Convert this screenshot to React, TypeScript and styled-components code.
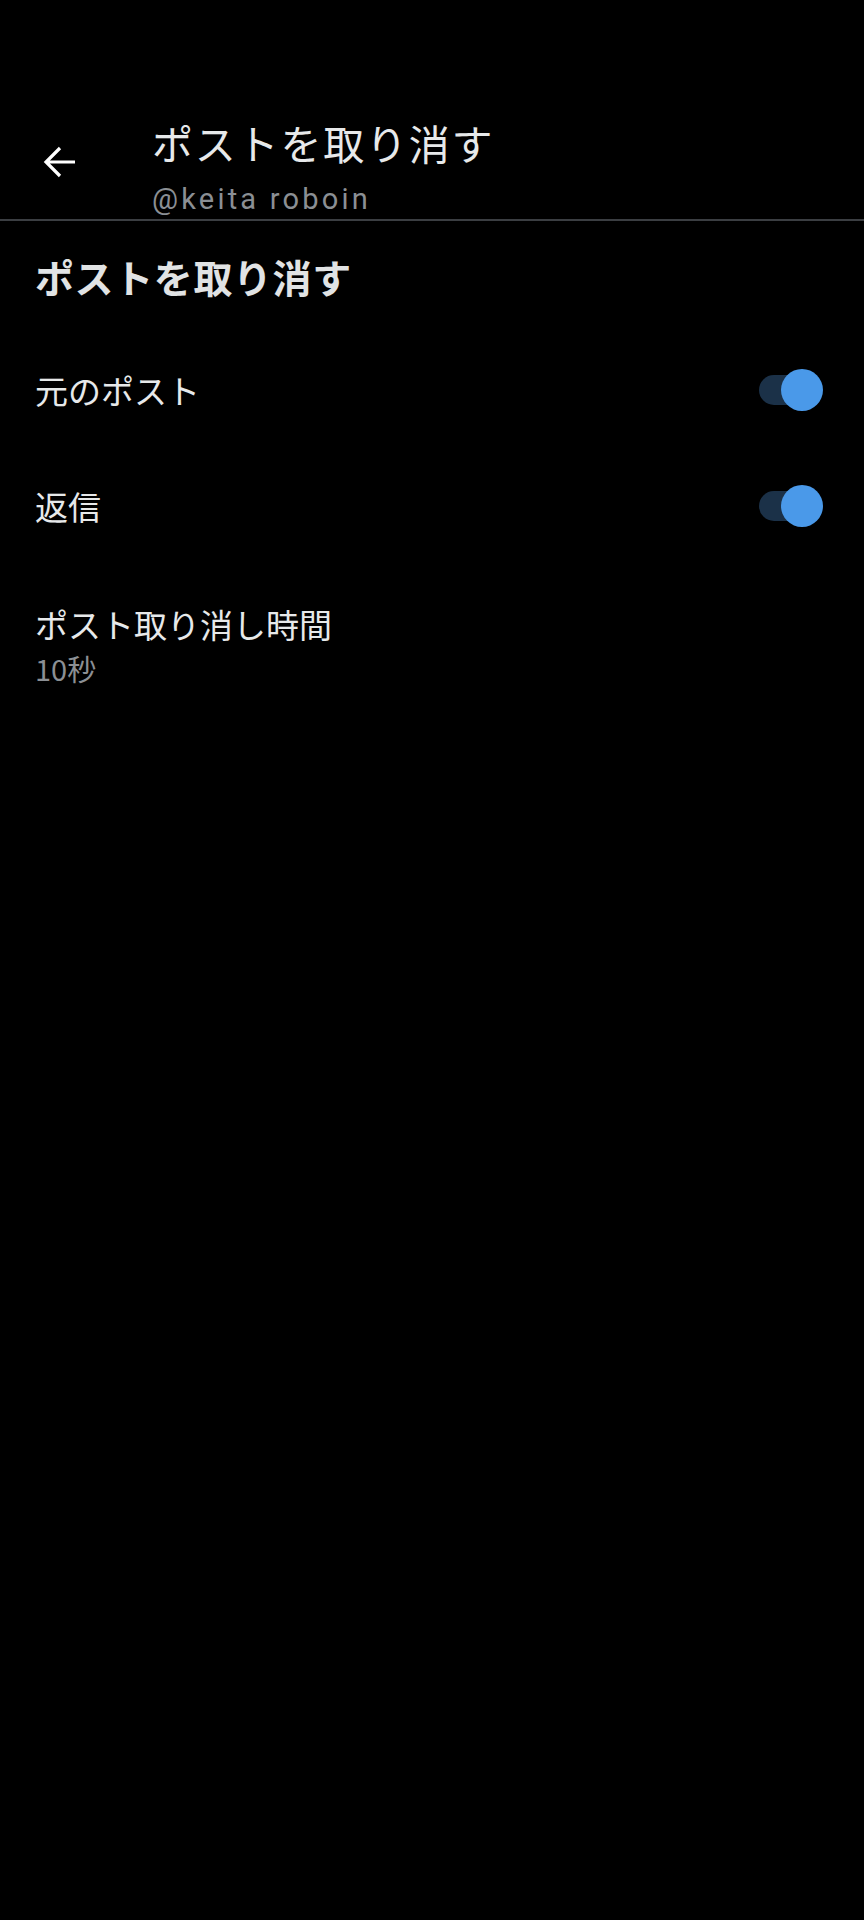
import React from "react";
import styled, { createGlobalStyle } from "styled-components";

const Global = createGlobalStyle`
  html, body { margin: 0; padding: 0; background: #000; }
  body { font-family: "Noto Sans CJK JP", "Noto Sans", sans-serif; color: #e7e9ea; }
`;

const Page = styled.div`
  width: 864px;
  min-height: 1920px;
  background: #000;
  display: flex;
  flex-direction: column;
`;

const Header = styled.header`
  display: flex;
  align-items: flex-start;
  padding-top: 117px;
  height: 102px;
  border-bottom: 2px solid #3b3e42;
`;

const BackSlot = styled.div`
  width: 109px;
  padding-left: 43px;
  padding-top: 28px;
  display: flex;
`;

const HeaderText = styled.div`
  display: flex;
  flex-direction: column;
`;

const Title = styled.div`
  font-size: 41px;
  line-height: 50px;
  letter-spacing: 1.8px;
  color: #e7e9ea;
`;

const Handle = styled.div`
  font-family: Roboto, sans-serif;
  font-size: 29px;
  line-height: 36px;
  letter-spacing: 3.2px;
  color: #8b8f94;
  margin-top: 14px;
`;

const Body = styled.main`
  display: flex;
  flex-direction: column;
  padding: 30px 41px 0 35px;
`;

const SectionHeading = styled.h2`
  margin: 0 0 31px;
  font-size: 39px;
  line-height: 50px;
  font-weight: 700;
  letter-spacing: 0.6px;
  color: #e1e3e4;
`;

const Row = styled.div`
  display: flex;
  align-items: center;
  justify-content: space-between;
  height: 116px;
`;

const Label = styled.div`
  font-size: 33px;
  line-height: 40px;
  color: #e7e9ea;
`;

const TimeBlock = styled.div`
  display: flex;
  flex-direction: column;
  padding-top: 40px;
`;

const SubValue = styled.div`
  font-size: 29px;
  line-height: 34px;
  margin-top: 7px;
  color: #8b8f94;
`;

const Track = styled.div<{ $on: boolean }>`
  position: relative;
  width: 58px;
  height: 30px;
  border-radius: 15px;
  background: ${(p) => (p.$on ? "#1b3148" : "#3b3e42")};
  margin-right: 6px;
`;

const Thumb = styled.div<{ $on: boolean }>`
  position: absolute;
  top: -6px;
  ${(p) => (p.$on ? "right: -6px;" : "left: -6px;")}
  width: 42px;
  height: 42px;
  border-radius: 50%;
  background: ${(p) => (p.$on ? "#4a99e9" : "#b0b3b8")};
`;

const Toggle = ({ on }: { on: boolean }) => (
  <Track $on={on}>
    <Thumb $on={on} />
  </Track>
);

const BackArrow = () => (
  <svg width="34" height="34" viewBox="0 0 34 34" fill="none">
    <path
      d="M32 17H3.5M17 3L3 17l14 14"
      stroke="#ffffff"
      strokeWidth="3.2"
      strokeLinecap="butt"
      strokeLinejoin="miter"
    />
  </svg>
);

export default function App() {
  return (
    <Page>
      <Global />
      <Header>
        <BackSlot>
          <BackArrow />
        </BackSlot>
        <HeaderText>
          <Title>ポストを取り消す</Title>
          <Handle>@keita roboin</Handle>
        </HeaderText>
      </Header>
      <Body>
        <SectionHeading>ポストを取り消す</SectionHeading>
        <Row>
          <Label>元のポスト</Label>
          <Toggle on />
        </Row>
        <Row>
          <Label>返信</Label>
          <Toggle on />
        </Row>
        <TimeBlock>
          <Label>ポスト取り消し時間</Label>
          <SubValue>10秒</SubValue>
        </TimeBlock>
      </Body>
    </Page>
  );
}
